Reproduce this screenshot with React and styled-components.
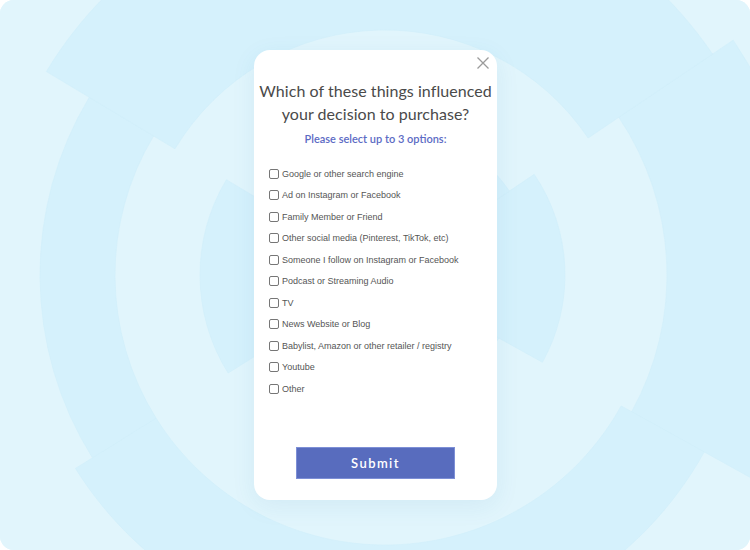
import React from 'react';
import styled, { createGlobalStyle } from 'styled-components';

const GlobalStyle = createGlobalStyle`
  html, body { margin: 0; padding: 0; background: #ffffff; }
  #root { width: 750px; height: 550px; }
`;

const Frame = styled.div`
  position: relative;
  width: 750px;
  height: 550px;
  border-radius: 14px;
  overflow: hidden;
  background: #e0f5fc;
  display: flex;
  justify-content: center;
  align-items: flex-start;
  padding-top: 50px;
  box-sizing: border-box;
`;

const Backdrop = styled.svg`
  position: absolute;
  inset: 0;
  width: 750px;
  height: 550px;
  z-index: 0;
`;

const Modal = styled.div`
  position: relative;
  z-index: 1;
  width: 243px;
  height: 450px;
  margin-left: 1px;
  background: #ffffff;
  border-radius: 16px;
  box-sizing: border-box;
  padding: 29px 0 21px;
  display: flex;
  flex-direction: column;
  align-items: center;
  box-shadow: 0 6px 24px rgba(40, 120, 160, 0.08);
`;

const Close = styled.button`
  position: absolute;
  top: 6px;
  right: 7px;
  width: 14px;
  height: 14px;
  padding: 0;
  border: none;
  background: transparent;
  display: flex;
  cursor: pointer;
`;

const Title = styled.h2`
  margin: 0;
  font-family: Lato, "Noto Sans", sans-serif;
  font-weight: 400;
  font-size: 16px;
  line-height: 23px;
  color: #4a4a4a;
  text-align: center;
  white-space: nowrap;
  letter-spacing: 0.05px;
`;

const Subtitle = styled.p`
  margin: 6px 0 0;
  font-family: Lato, "Noto Sans", sans-serif;
  font-weight: 600;
  font-size: 11px;
  line-height: 15px;
  color: #5c6bc4;
  text-align: center;
`;

const Options = styled.div`
  align-self: stretch;
  margin-top: 17px;
  padding-left: 15px;
  display: flex;
  flex-direction: column;
`;

const Option = styled.label`
  display: flex;
  align-items: center;
  gap: 3px;
  height: 21.5px;
  font-family: "Liberation Sans", Arial, sans-serif;
  font-size: 9px;
  color: #555555;
  cursor: pointer;
`;

const Box = styled.input`
  appearance: none;
  -webkit-appearance: none;
  margin: 0;
  width: 10px;
  height: 10px;
  border: 1px solid #767676;
  border-radius: 2px;
  box-sizing: border-box;
  background: #fff;
  &:checked { background: #5a6dbe; border-color: #5a6dbe; }
`;

const Submit = styled.button`
  margin-top: auto;
  width: 159px;
  height: 32px;
  background: #586cbe;
  border: 1px solid #7d8fd6;
  color: #ffffff;
  font-family: Lato, "Noto Sans", sans-serif;
  font-weight: 600;
  font-size: 13px;
  letter-spacing: 1.4px;
  cursor: pointer;
`;

const options = [
  'Google or other search engine',
  'Ad on Instagram or Facebook',
  'Family Member or Friend',
  'Other social media (Pinterest, TikTok, etc)',
  'Someone I follow on Instagram or Facebook',
  'Podcast or Streaming Audio',
  'TV',
  'News Website or Blog',
  'Babylist, Amazon or other retailer / registry',
  'Youtube',
  'Other',
];

const CX = 385;
const CY = 275;

function sector(r1, r2, a1, a2) {
  const rad = (d) => (d * Math.PI) / 180;
  const p = (r, a) => [CX + r * Math.cos(rad(a)), CY + r * Math.sin(rad(a))];
  const [x1, y1] = p(r2, a1);
  const [x2, y2] = p(r2, a2);
  const [x3, y3] = p(r1, a2);
  const [x4, y4] = p(r1, a1);
  const large = a2 - a1 > 180 ? 1 : 0;
  return `M${x1} ${y1} A${r2} ${r2} 0 ${large} 1 ${x2} ${y2} L${x3} ${y3} A${r1} ${r1} 0 ${large} 0 ${x4} ${y4} Z`;
}

// dark bands per sector: [angleStart, angleEnd, [[r1,r2],...]]
const sectors = [
  [-34, 29, [[0, 180], [282, 420]]],
  [29, 148, [[0, 130], [270, 365]]],
  [148, 211, [[0, 185], [270, 345]]],
  [211, 326, [[0, 150], [245, 395]]],
];

const Pattern = () => (
  <Backdrop viewBox="0 0 750 550" aria-hidden="true">
    <rect width="750" height="550" fill="#e1f5fc" />
    {sectors.map(([a1, a2, bands], i) =>
      bands.map(([r1, r2], j) => (
        <path key={`${i}-${j}`} d={sector(r1, r2, a1, a2)} fill="#d5f1fc" stroke="#d0eefa" strokeWidth="0.6" />
      ))
    )}
  </Backdrop>
);

export default function App() {
  return (
    <>
      <GlobalStyle />
      <Frame>
        <Pattern />
        <Modal>
          <Close aria-label="Close">
            <svg width="14" height="14" viewBox="0 0 14 14">
              <path d="M1.5 1.5 L12.5 12.5 M12.5 1.5 L1.5 12.5" stroke="#9b9b9b" strokeWidth="1.3" fill="none" />
            </svg>
          </Close>
          <Title>
            Which of these things influenced
            <br />
            your decision to purchase?
          </Title>
          <Subtitle>Please select up to 3 options:</Subtitle>
          <Options>
            {options.map((o) => (
              <Option key={o}>
                <Box type="checkbox" />
                {o}
              </Option>
            ))}
          </Options>
          <Submit>Submit</Submit>
        </Modal>
      </Frame>
    </>
  );
}
